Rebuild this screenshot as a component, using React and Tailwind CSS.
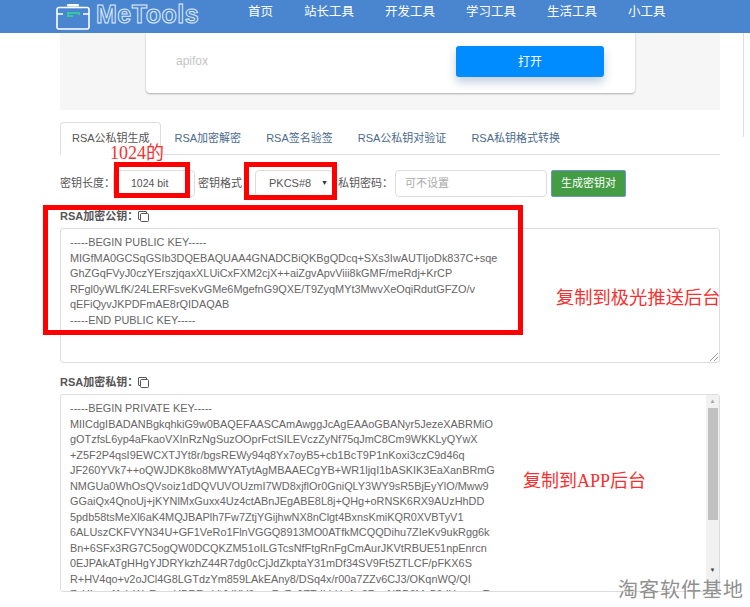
import React from "react";

const navItems = ["首页", "站长工具", "开发工具", "学习工具", "生活工具", "小工具"];
const tabs = ["RSA公私钥生成", "RSA加密解密", "RSA签名验签", "RSA公私钥对验证", "RSA私钥格式转换"];

const publicKey = `-----BEGIN PUBLIC KEY-----
MIGfMA0GCSqGSIb3DQEBAQUAA4GNADCBiQKBgQDcq+SXs3IwAUTIjoDk837C+sqe
GhZGqFVyJ0czYErszjqaxXLUiCxFXM2cjX++aiZgvApvViii8kGMF/meRdj+KrCP
RFgl0yWLfK/24LERFsveKvGMe6MgefnG9QXE/T9ZyqMYt3MwvXeOqiRdutGFZO/v
qEFiQyvJKPDFmAE8rQIDAQAB
-----END PUBLIC KEY-----`;

const privateKey = `-----BEGIN PRIVATE KEY-----
MIICdgIBADANBgkqhkiG9w0BAQEFAASCAmAwggJcAgEAAoGBANyr5JezeXABRMiO
gOTzfsL6yp4aFkaoVXInRzNgSuzOOprFctSILEVczZyNf75qJmC8Cm9WKKLyQYwX
+Z5F2P4qsI9EWCXTJYt8r/bgsREWy94q8Yx7oyB5+cb1BcT9P1nKoxi3czC9d46q
JF260YVk7++oQWJDK8ko8MWYATytAgMBAAECgYB+WR1ljqI1bASKIK3EaXanBRmG
NMGUa0WhOsQVsoiz1dDQVUVOUzmI7WD8xjflOr0GniQLY3WY9sR5BjEyYlO/Mww9
GGaiQx4QnoUj+jKYNlMxGuxx4Uz4ctABnJEgABE8L8j+QHg+oRNSK6RX9AUzHhDD
5pdb58tsMeXl6aK4MQJBAPlh7Fw7ZtjYGijhwNX8nClgt4BxnsKmiKQR0XVBTyV1
6ALUszCKFVYN34U+GF1VeRo1FlnVGGQ8913MO0ATfkMCQQDihu7ZIeKv9ukRgg6k
Bn+6SFx3RG7C5ogQW0DCQKZM51oILGTcsNfFtgRnFgCmAurJKVtRBUE51npEnrcn
0EJPAkATgHHgYJDRYkzhZ44R7dg0cCjJdZkptaY31mDf34SV9Ft5ZTLCF/pFKX6S
R+HV4qo+v2oJCl4G8LGTdzYm859LAkEAny8/DSq4x/r00a7ZZv6CJ3/OKqnWQ/QI
ZsHbm+fAdzWzEgxcHBRFmVtJdXV6ceoFoZo9ZTdLhUsA+8RqcNPB6Mv56dHsaqmT`;

const CopyIcon = () => (
  <svg width="11" height="11" viewBox="0 0 11 11" fill="none" stroke="#555" strokeWidth="1" className="shrink-0">
    <path d="M2 8.5H1a.5.5 0 0 1-.5-.5V1A.5.5 0 0 1 1 .5h7a.5.5 0 0 1 .5.5v1" />
    <rect x="2.5" y="2.5" width="8" height="8" rx="1" />
  </svg>
);

const Logo = () => (
  <div className="flex items-center w-[198px] shrink-0 pl-[56px]">
    <svg width="34" height="26" viewBox="0 0 34 26" fill="none" className="shrink-0">
      <rect x="11" y="0" width="12" height="2.5" rx="1" fill="#fff" />
      <path d="M8 3.5H3a2 2 0 0 0-2 2v17.500a2 2 0 0 0 2 2h28a2 2 0 0 0 2-2V5.500a2 2 0 0 0-2-2h-5" stroke="#fff" strokeWidth="1.6" />
      <path d="M8 3.500h18" stroke="#fff" strokeWidth="1.6" />
      <path d="M1 10h6M27 10h6" stroke="#fff" strokeWidth="1.6" />
      <path d="M17 12h-5V9h11v2" stroke="#34c9a0" strokeWidth="2" />
    </svg>
    <span className="ml-[6px] font-['Liberation_Sans',sans-serif] font-bold text-[25px] leading-none text-transparent [-webkit-text-stroke:1px_#dfeafa] tracking-[0.5px] whitespace-nowrap mb-[4px]">
      MeTools
    </span>
  </div>
);

export default function App() {
  return (
    <div className="relative w-[750px] h-[607px] overflow-hidden bg-white font-['Liberation_Sans','Noto_Sans_CJK_SC',sans-serif]">
      {/* Top nav */}
      <header className="flex h-[33px] bg-[#4a86d0] overflow-hidden">
        <Logo />
        <nav className="flex items-center gap-[31px] text-[12.5px] text-white ml-[50px] pb-[8px]">
          {navItems.map((item) => (
            <span key={item}>{item}</span>
          ))}
        </nav>
      </header>

      {/* Ad banner */}
      <div className="ml-[60px] w-[660px] h-[77px] bg-[#f6f6f6] pl-[86px]">
        <div className="flex items-center justify-between w-[489px] h-[60px] bg-white rounded-b-[4px] shadow-[0_1px_2px_rgba(0,0,0,0.3)] pl-[30px] pr-[31px]">
          <span className="text-[12px] text-[#c4c4c4] mb-[4px]">apifox</span>
          <button className="w-[148px] h-[31px] mt-[-3px] rounded-[3px] bg-[#008cff] text-[12px] text-white shadow-[0_5px_10px_rgba(0,60,120,0.25)]">
            打开
          </button>
        </div>
      </div>

      <main className="pl-[60px] w-[720px]">
        {/* Tabs */}
        <div className="flex mt-[12px] h-[33px] border-b border-[#ddd] text-[11px] text-[#4b6a8c]">
          {tabs.map((tab, i) => (
            <div
              key={tab}
              className={
                i === 0
                  ? "flex items-center w-[101px] h-[33px] pl-[11px] mr-[1px] border border-[#ddd] border-b-white rounded-t-[4px] text-[#555] bg-white whitespace-nowrap"
                  : "flex items-center h-[33px] px-[12.5px] whitespace-nowrap"
              }
            >
              {tab}
            </div>
          ))}
        </div>

        {/* Key options */}
        <div className="flex items-center mt-[15px] h-[27px] text-[11px] text-[#555] whitespace-nowrap">
          <span className="w-[53px] shrink-0">密钥长度：</span>
          <div className="flex items-center w-[82px] h-[27px] border border-[#ddd] rounded-[4px] pl-[17px] text-[10.5px]">
            1024 bit
          </div>
          <span className="ml-[3px] w-[57px] shrink-0">密钥格式：</span>
          <div className="flex items-center justify-between w-[78px] h-[27px] border border-[#ddd] rounded-[4px] pl-[13px] pr-[4px]">
            PKCS#8
            <span className="text-[7px] text-[#333]">▼</span>
          </div>
          <span className="ml-[5px] w-[57px] shrink-0">私钥密码：</span>
          <div className="flex items-center w-[152px] h-[27px] border border-[#ddd] rounded-[4px] pl-[9px] text-[#aaa]">
            可不设置
          </div>
          <button className="w-[75px] h-[27px] ml-[4px] rounded-[2px] bg-[#449d44] border border-[#6f94c9] text-[11px] text-white">
            生成密钥对
          </button>
        </div>

        {/* Public key */}
        <div className="flex items-center mt-[13px] h-[12px] text-[11px] font-bold text-[#555]">
          RSA加密公钥：
          <CopyIcon />
        </div>
        <div className="relative mt-[6px] h-[135px] border border-[#ddd] rounded-[3px] px-[9px] py-[6px] text-[10.9px] leading-[15.5px] text-[#666] whitespace-pre">
          {publicKey}
          <svg width="9" height="9" viewBox="0 0 9 9" className="absolute right-[1px] bottom-[1px]" stroke="#999" strokeWidth="1">
            <path d="M1 9 9 1M5 9l4-4" />
          </svg>
        </div>

        {/* Private key */}
        <div className="flex items-center mt-[13px] h-[12px] text-[11px] font-bold text-[#555]">
          RSA加密私钥：
          <CopyIcon />
        </div>
        <div className="flex mt-[6px] h-[198px] border border-[#ddd] rounded-[3px] overflow-hidden">
          <div className="flex-1 overflow-hidden px-[9px] py-[6px] text-[10.9px] leading-[15.5px] text-[#666] whitespace-pre">
            {privateKey}
          </div>
          <div className="flex flex-col items-center w-[13px] bg-[#f1f1f1]">
            <span className="h-[13px] text-[6px] leading-[13px] text-[#a3a3a3]">▲</span>
            <div className="w-[10px] h-[112px] bg-[#c1c1c1]" />
            <span className="mt-auto h-[13px] text-[6px] leading-[13px] text-[#444]">▼</span>
            <div className="h-[14px]" />
          </div>
        </div>
      </main>

      {/* Annotations drawn over the page */}
      <div className="absolute left-[743px] top-[33px] w-px h-[104px] bg-[#ddd]" />
      <div className="absolute left-[114px] top-[162px] w-[76px] h-[36px] border-[5px] border-[#f00]" />
      <div className="absolute left-[244px] top-[162px] w-[93px] h-[38px] border-[5px] border-[#f00]" />
      <div className="absolute left-[43px] top-[205px] w-[480px] h-[130px] border-[5px] border-[#f00]" />
      <div className="absolute left-[110px] top-[143px] font-['Liberation_Serif','Noto_Sans_CJK_SC',serif] text-[18px] leading-[20px] text-[#f63030]">1024的</div>
      <div className="absolute left-[556px] top-[288px] font-['Liberation_Serif','Noto_Sans_CJK_SC',serif] text-[18.3px] leading-[20px] text-[#f63030] whitespace-nowrap">复制到极光推送后台</div>
      <div className="absolute left-[523px] top-[471px] font-['Liberation_Serif','Noto_Sans_CJK_SC',serif] text-[18px] leading-[20px] text-[#f63030] whitespace-nowrap">复制到APP后台</div>
      <div className="absolute left-[618px] top-[579px] text-[20px] leading-[22px] tracking-[1px] text-[#909090] whitespace-nowrap">淘客软件基地</div>
    </div>
  );
}
